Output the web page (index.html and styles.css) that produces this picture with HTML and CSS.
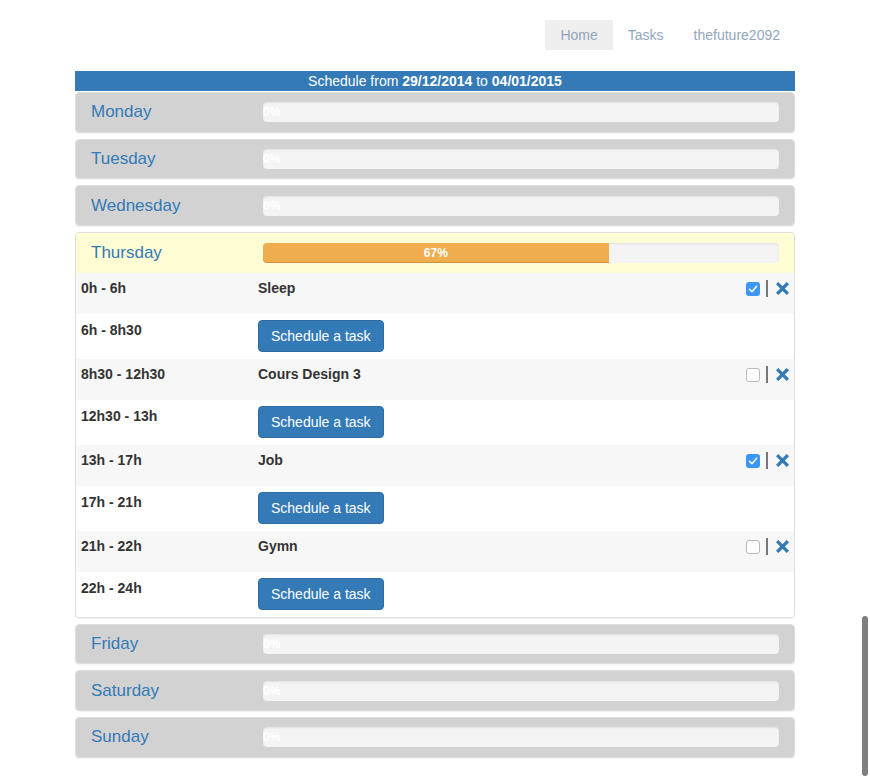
FILE: index.html
```html
<!DOCTYPE html>
<html>
<head>
<meta charset="utf-8">
<link rel="stylesheet" href="styles.css">
</head>
<body>
<div class="container">
  <nav class="nav">
    <a class="pill active">Home</a>
    <a class="pill">Tasks</a>
    <a class="pill">thefuture2092</a>
  </nav>
  <div class="title">Schedule from <b>29/12/2014</b> to <b>04/01/2015</b></div>

  <div class="panel">
    <div class="heading"><span class="day">Monday</span><div class="progress"><div class="bar">0%</div></div></div>
  </div>
  <div class="panel">
    <div class="heading"><span class="day">Tuesday</span><div class="progress"><div class="bar">0%</div></div></div>
  </div>
  <div class="panel">
    <div class="heading"><span class="day">Wednesday</span><div class="progress"><div class="bar">0%</div></div></div>
  </div>

  <div class="panel open">
    <div class="heading"><span class="day">Thursday</span><div class="progress"><div class="bar fill" style="width:67%">67%</div></div></div>
    <div class="rows">
      <div class="row task">
        <span class="time">0h - 6h</span><span class="name">Sleep</span>
        <span class="actions"><span class="check on"><svg viewBox="0 0 14 14" width="14" height="14"><path d="M3.5 7.3 L6 9.8 L10.6 4.2" fill="none" stroke="#fff" stroke-width="1.5" stroke-linecap="round" stroke-linejoin="round"/></svg></span><span class="sep"></span><svg class="del" viewBox="0 0 14 14" width="13" height="13"><path d="M2.5 2.5 L11.5 11.5 M11.5 2.5 L2.5 11.5" stroke="#337ab7" stroke-width="3.6" stroke-linecap="square"/></svg></span>
      </div>
      <div class="row free">
        <span class="time">6h - 8h30</span><span class="name"><button class="btn">Schedule a task</button></span><span></span>
      </div>
      <div class="row task">
        <span class="time">8h30 - 12h30</span><span class="name">Cours Design 3</span>
        <span class="actions"><span class="check"></span><span class="sep"></span><svg class="del" viewBox="0 0 14 14" width="13" height="13"><path d="M2.5 2.5 L11.5 11.5 M11.5 2.5 L2.5 11.5" stroke="#337ab7" stroke-width="3.6" stroke-linecap="square"/></svg></span>
      </div>
      <div class="row free">
        <span class="time">12h30 - 13h</span><span class="name"><button class="btn">Schedule a task</button></span><span></span>
      </div>
      <div class="row task">
        <span class="time">13h - 17h</span><span class="name">Job</span>
        <span class="actions"><span class="check on"><svg viewBox="0 0 14 14" width="14" height="14"><path d="M3.5 7.3 L6 9.8 L10.6 4.2" fill="none" stroke="#fff" stroke-width="1.5" stroke-linecap="round" stroke-linejoin="round"/></svg></span><span class="sep"></span><svg class="del" viewBox="0 0 14 14" width="13" height="13"><path d="M2.5 2.5 L11.5 11.5 M11.5 2.5 L2.5 11.5" stroke="#337ab7" stroke-width="3.6" stroke-linecap="square"/></svg></span>
      </div>
      <div class="row free">
        <span class="time">17h - 21h</span><span class="name"><button class="btn">Schedule a task</button></span><span></span>
      </div>
      <div class="row task">
        <span class="time">21h - 22h</span><span class="name">Gymn</span>
        <span class="actions"><span class="check"></span><span class="sep"></span><svg class="del" viewBox="0 0 14 14" width="13" height="13"><path d="M2.5 2.5 L11.5 11.5 M11.5 2.5 L2.5 11.5" stroke="#337ab7" stroke-width="3.6" stroke-linecap="square"/></svg></span>
      </div>
      <div class="row free">
        <span class="time">22h - 24h</span><span class="name"><button class="btn">Schedule a task</button></span><span></span>
      </div>
    </div>
  </div>

  <div class="panel">
    <div class="heading"><span class="day">Friday</span><div class="progress"><div class="bar">0%</div></div></div>
  </div>
  <div class="panel">
    <div class="heading"><span class="day">Saturday</span><div class="progress"><div class="bar">0%</div></div></div>
  </div>
  <div class="panel">
    <div class="heading"><span class="day">Sunday</span><div class="progress"><div class="bar">0%</div></div></div>
  </div>
</div>
<div class="scrollbar"></div>
</body>
</html>
```

FILE: styles.css
```css
* { box-sizing: border-box; }
html, body { margin: 0; padding: 0; background: #fff; }
body {
  font-family: "Liberation Sans", Arial, sans-serif;
  font-size: 14px;
  color: #333;
  padding-top: 20px;
}
.container { width: 720px; margin: 0 auto; }
.nav { display: flex; justify-content: flex-end; margin-bottom: 21px; }
.pill {
  display: block;
  padding: 5px 15px;
  line-height: 20px;
  color: #93a6bd;
  font-size: 14px;
  border-radius: 0;
}
.pill.active { background: #eee; }
.title {
  background: #337ab7;
  color: #fff;
  text-align: center;
  height: 20px;
  line-height: 20px;
  font-size: 14px;
  margin-bottom: 1px;
}
.panel {
  border: 1px solid #ddd;
  border-radius: 4px;
  margin-bottom: 6px;
  background: #fff;
  box-shadow: 0 1px 1px rgba(0,0,0,.05);
  overflow: hidden;
}
.heading {
  display: flex;
  align-items: center;
  height: 38.7px;
  padding: 0 15px;
  background: #d2d2d2;
}
.open .heading { background: #fffdd3; height: 39.6px; }
.day {
  width: 172px;
  flex: none;
  font-size: 17px;
  color: #337ab7;
}
.progress {
  flex: 1;
  height: 20px;
  background: #f4f4f4;
  border-radius: 4px;
  box-shadow: inset 0 1px 2px rgba(0,0,0,.08);
  overflow: visible;
  display: flex;
}
.bar {
  width: 0;
  height: 20px;
  line-height: 20px;
  color: #fff;
  font-size: 12px;
  font-weight: bold;
  white-space: nowrap;
  text-align: left;
}
.bar.fill {
  background: #f0ad4e;
  text-align: center;
  border-radius: 4px 0 0 4px;
  box-shadow: inset 0 -1px 0 rgba(0,0,0,.15);
}
.row {
  display: grid;
  grid-template-columns: 177px 1fr auto;
  padding: 6px 5px 0 5px;
  font-size: 14px;
  font-weight: bold;
  line-height: 20px;
  color: #333;
}
.row.task { height: 41px; background: #f7f7f7; padding-top: 5px; }
.row.free { height: 45px; background: #fff; }
.actions { display: flex; align-items: center; height: 20px; margin-top: 1px; }
.check {
  width: 14px;
  height: 14px;
  border: 1px solid #b8b8b8;
  border-radius: 3px;
  background: #fff;
  display: flex;
  align-items: center;
  justify-content: center;
}
.check.on { border: none; background: #3a97f8; }
.sep {
  width: 2px;
  height: 17px;
  background: #777;
  margin: 0 8px 0 6px;
}
.del { display: block; }
.btn {
  font-family: "Liberation Sans", Arial, sans-serif;
  font-size: 14px;
  color: #fff;
  background: #337ab7;
  border: 1px solid #2e6da4;
  border-radius: 4px;
  height: 32px;
  padding: 0 12px;
  line-height: 20px;
  margin: 0;
  display: block;
}
.scrollbar {
  position: fixed;
  left: 862px;
  top: 616px;
  width: 6px;
  height: 160px;
  background: #7f7f7f;
  border-radius: 3px;
}
```
